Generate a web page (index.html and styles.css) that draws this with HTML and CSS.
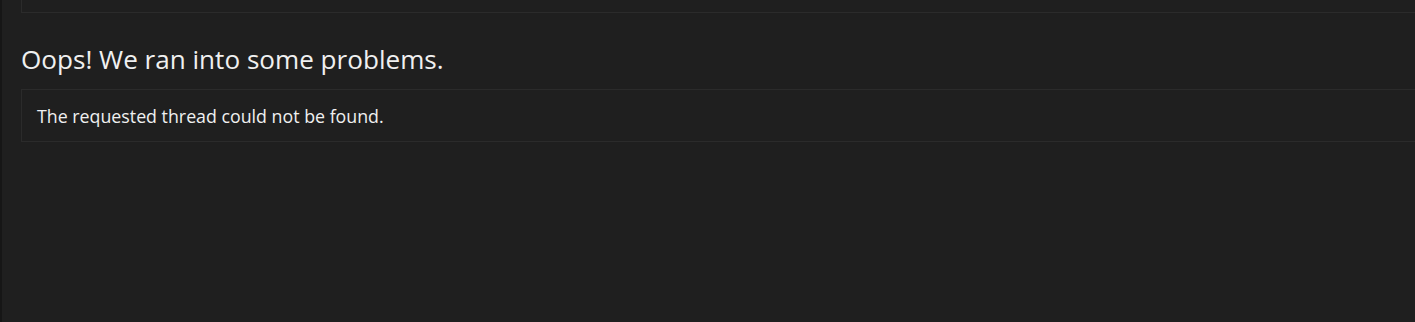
FILE: index.html
```html
<!DOCTYPE html>
<html lang="en">
<head>
<meta charset="utf-8">
<title>Error</title>
<link rel="stylesheet" href="styles.css">
</head>
<body>
<div class="page">
  <main class="content">
    <div class="prev-block"></div>
    <h1 class="title">Oops! We ran into some problems.</h1>
    <div class="block">
      <div class="block-body">The requested thread could not be found.</div>
    </div>
  </main>
</div>
</body>
</html>
```

FILE: styles.css
```css
html, body {
  margin: 0;
  padding: 0;
  height: 100%;
  background: #1f1f1f;
}
.page {
  min-height: 100%;
  border-left: 2px solid #161616;
  box-sizing: border-box;
  font-family: "Open Sans", "Noto Sans", sans-serif;
  color: #f0f0f0;
}
.content {
  padding-left: 19px;
}
.prev-block {
  height: 12px;
  border-left: 1px solid #2b2b2b;
  border-bottom: 1px solid #2b2b2b;
}
.title {
  margin: 0;
  padding-top: 30px;
  height: 46px;
  box-sizing: content-box;
  font-size: 26.1px;
  font-weight: 400;
  line-height: 32px;
}
.block {
  border: 1px solid #2b2b2b;
  border-right: 0;
  height: 51px;
  display: flex;
  align-items: center;
  padding-left: 15px;
}
.block-body {
  font-size: 17.8px;
  line-height: 22px;
}
```
